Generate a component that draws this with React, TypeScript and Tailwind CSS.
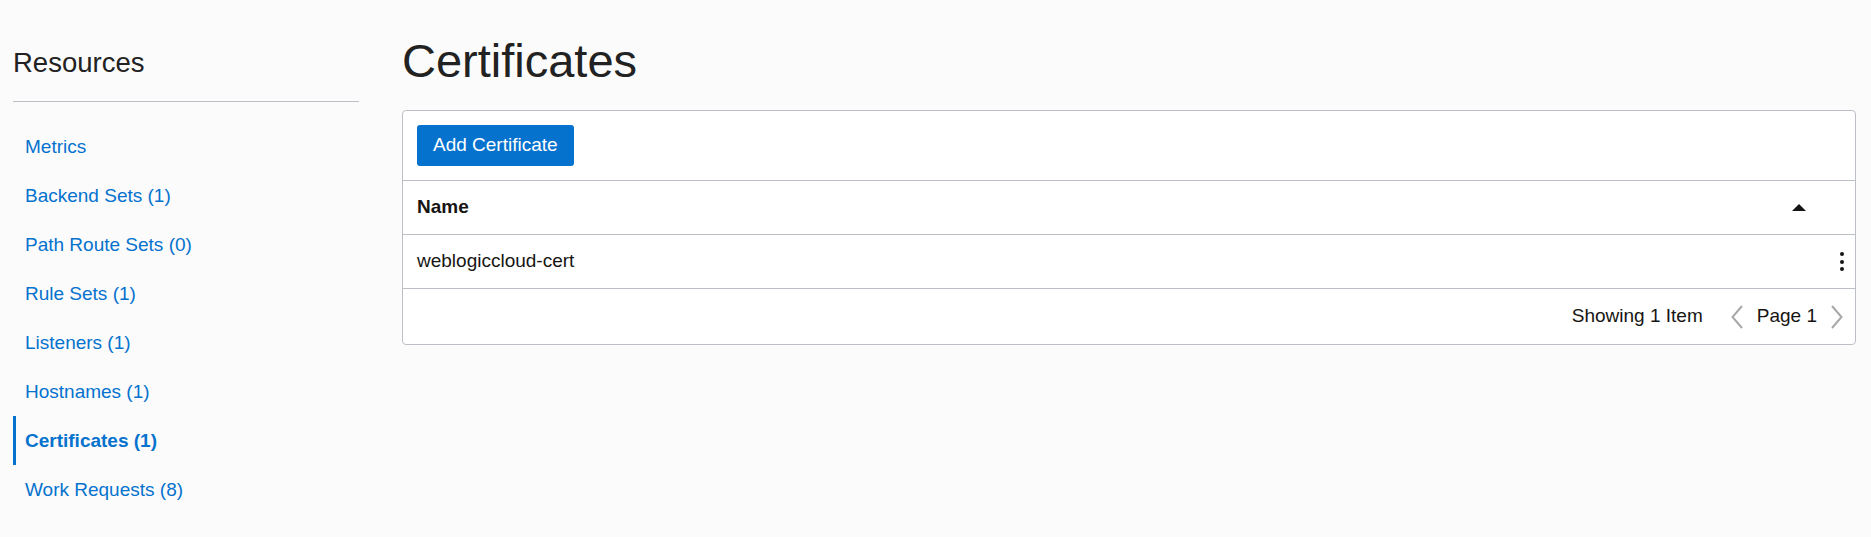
import React from "react";

const items = [
  { label: "Metrics" },
  { label: "Backend Sets (1)" },
  { label: "Path Route Sets (0)" },
  { label: "Rule Sets (1)" },
  { label: "Listeners (1)" },
  { label: "Hostnames (1)" },
  { label: "Certificates (1)", active: true },
  { label: "Work Requests (8)" },
];

function Chevron({ dir }: { dir: "left" | "right" }) {
  return (
    <svg width="12" height="24" viewBox="0 0 12 24" fill="none">
      <path
        d={dir === "left" ? "M11 1 L1.5 12 L11 23" : "M1 1 L10.5 12 L1 23"}
        stroke="#a8a8a8"
        strokeWidth="2"
      />
    </svg>
  );
}

export default function App() {
  return (
    <div className="min-h-[537px] w-full bg-[#fbfbfb] font-['Liberation_Sans',Arial,sans-serif] text-[#161513] flex">
      {/* Sidebar */}
      <aside className="w-[359px] pl-[13px] shrink-0">
        <h2 className="pt-[47px] text-[27.5px] leading-[32px] font-normal text-[#222]">Resources</h2>
        <div className="mt-[22px] border-t border-[#bcc0c6]" />
        <ul className="mt-[20px]">
          {items.map((it) => (
            <li
              key={it.label}
              className={
                it.active
                  ? "h-[49px] leading-[49px] text-[19px] border-l-[3px] border-[#0572ce] pl-[9px] font-bold text-[#0572ce]"
                  : "h-[49px] leading-[49px] text-[19px] pl-[12px] text-[#0572ce]"
              }
            >
              {it.label}
            </li>
          ))}
        </ul>
      </aside>

      {/* Main */}
      <main className="flex-1 ml-[43px] mr-[15px]">
        <h1 className="pt-[34px] text-[47px] leading-[54px] font-normal text-[#222]">Certificates</h1>
        <div className="mt-[22px] bg-white border border-[#bcc0c6] rounded-[4px]">
          <div className="p-[14px]">
            <button className="h-[41px] px-[16px] bg-[#0572ce] text-white text-[19px] rounded-[3px]">
              Add Certificate
            </button>
          </div>
          <div className="h-[54px] border-t border-[#bcc0c6] flex items-center justify-between pl-[14px] pr-[49px]">
            <span className="text-[19px] font-bold">Name</span>
            <svg width="14" height="7" viewBox="0 0 14 7">
              <path d="M0 7 L7 0 L14 7 Z" fill="#161513" />
            </svg>
          </div>
          <div className="h-[54px] border-t border-[#bcc0c6] flex items-center justify-between pl-[14px] pr-[11px]">
            <span className="text-[19px]">weblogiccloud-cert</span>
            <div className="flex flex-col gap-[3.5px] items-center">
              <span className="w-[4px] h-[4px] rounded-full bg-[#161513]" />
              <span className="w-[4px] h-[4px] rounded-full bg-[#161513]" />
              <span className="w-[4px] h-[4px] rounded-full bg-[#161513]" />
            </div>
          </div>
          <div className="h-[56px] border-t border-[#bcc0c6] flex items-center justify-end pr-[12px] text-[19px]">
            <span>Showing 1 Item</span>
            <span className="ml-[28px] flex items-center">
              <Chevron dir="left" />
            </span>
            <span className="ml-[14px]">Page 1</span>
            <span className="ml-[14px] flex items-center">
              <Chevron dir="right" />
            </span>
          </div>
        </div>
      </main>
    </div>
  );
}
